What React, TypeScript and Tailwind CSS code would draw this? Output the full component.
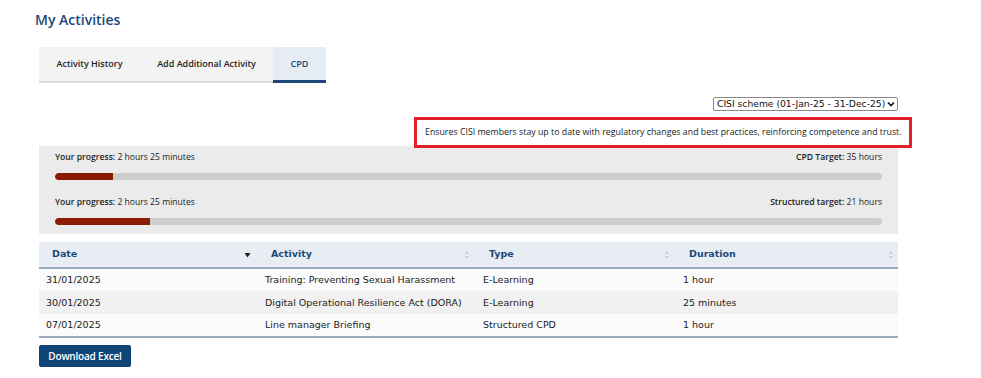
import React from 'react';

const rows = [
  { date: '31/01/2025', activity: 'Training: Preventing Sexual Harassment', type: 'E-Learning', duration: '1 hour' },
  { date: '30/01/2025', activity: 'Digital Operational Resilience Act (DORA)', type: 'E-Learning', duration: '25 minutes' },
  { date: '07/01/2025', activity: 'Line manager Briefing', type: 'Structured CPD', duration: '1 hour' },
];

const progress = [
  { label: 'CPD Target:', target: '35 hours', pct: 7 },
  { label: 'Structured target:', target: '21 hours', pct: 11.5 },
];

function SortIcon() {
  return (
    <svg width="6" height="10" viewBox="0 0 6 10" className="text-[#c9d1da]">
      <path d="M3 1 L5.5 4 H0.5 Z M3 9 L5.5 6 H0.5 Z" fill="currentColor" />
    </svg>
  );
}

export default function App() {
  return (
    <div className="w-[981px] h-[378px] bg-white font-['Open_Sans',sans-serif] text-[#222] overflow-hidden">
      <div className="pl-[39px] w-[898px]">
        {/* Page title */}
        <h1 className="-ml-[4px] pt-[9px] text-[14px] leading-[22px] font-semibold text-[#1c4a78]">My Activities</h1>

        {/* Tabs */}
        <div className="mt-[16px] flex w-[287px] h-[36px] bg-[#f3f3f3] text-[9px] font-semibold text-[#222]">
          <div className="w-[101px] flex items-center justify-center border-b-2 border-[#dcdcdc]">Activity History</div>
          <div className="w-[133px] flex items-center justify-center border-b-2 border-[#dcdcdc]">Add Additional Activity</div>
          <div className="w-[53px] flex items-center justify-center bg-[#e6ecf3] text-[#1c4a78] border-b-[3px] border-[#1c4a78]">CPD</div>
        </div>

        {/* Scheme selector */}
        <div className="mt-[14px] flex justify-end">
          <div className="h-[14px] w-[185px] flex items-center justify-between gap-[2px] px-[3px] border border-[#8a8a8a] rounded-[2px] font-['DejaVu_Sans',sans-serif] text-[9.2px] leading-[12px] text-[#111] whitespace-nowrap">
            <span>CISI scheme (01-Jan-25 - 31-Dec-25)</span>
            <svg width="8" height="6" viewBox="0 0 8 6" className="shrink-0">
              <path d="M1 1.5 L4 4.5 L7 1.5" stroke="#111" strokeWidth="1.6" fill="none" />
            </svg>
          </div>
        </div>

        {/* Highlighted description */}
        <div className="mt-[6px] flex justify-end -mr-[14px] relative z-10">
          <div className="w-[498px] h-[31px] border-[3px] border-[#e0202a] bg-white flex items-center pl-[8px] text-[8.8px] text-[#222]">
            Ensures CISI members stay up to date with regulatory changes and best practices, reinforcing competence and trust.
          </div>
        </div>

        {/* Progress panel */}
        <div className="-mt-[2px] bg-[#ebebeb] px-[16px] pt-[5px] pb-[9px] flex flex-col gap-[16px]">
          {progress.map((p) => (
            <div key={p.label}>
              <div className="flex justify-between text-[8.6px] leading-[12px] text-[#222]">
                <span>
                  <span className="font-semibold">Your progress:</span> 2 hours 25 minutes
                </span>
                <span>
                  <span className="font-semibold">{p.label}</span> {p.target}
                </span>
              </div>
              <div className="mt-[10px] h-[7px] rounded-full bg-[#cdcdcd] overflow-hidden">
                <div className="h-full bg-[#8b1c03] rounded-l-full" style={{ width: `${p.pct}%` }} />
              </div>
            </div>
          ))}
        </div>

        {/* Activity table */}
        <table className="mt-[8px] w-full border-collapse font-['DejaVu_Sans',sans-serif] text-[9.5px] text-[#222]">
          <thead>
            <tr className="h-[26px] bg-[#e8edf3] border-b-2 border-[#9aabbd] text-[#1c4a78] font-bold">
              <th className="w-[219px] text-left pl-[13px]">
                <div className="flex items-center justify-between pr-[7px]">
                  <span>Date</span>
                  <svg width="7" height="6" viewBox="0 0 7 6">
                    <path d="M0.5 1 H6.5 L3.5 5.5 Z" fill="#222" />
                  </svg>
                </div>
              </th>
              <th className="w-[218px] text-left pl-[13px]">
                <div className="flex items-center justify-between pr-[6px]">
                  <span>Activity</span>
                  <SortIcon />
                </div>
              </th>
              <th className="w-[200px] text-left pl-[13px]">
                <div className="flex items-center justify-between pr-[6px]">
                  <span>Type</span>
                  <SortIcon />
                </div>
              </th>
              <th className="text-left pl-[13px]">
                <div className="flex items-center justify-between pr-[4px]">
                  <span>Duration</span>
                  <SortIcon />
                </div>
              </th>
            </tr>
          </thead>
          <tbody className="border-b-2 border-[#9aabbd]">
            {rows.map((r, i) => (
              <tr key={r.date} className={i % 2 === 1 ? 'bg-[#f1f1f1]' : 'bg-[#fbfbfb]'}>
                <td className="h-[23px] p-0 pl-[7px] pt-[1px]">{r.date}</td>
                <td className="h-[23px] p-0 pl-[7px] pt-[1px]">{r.activity}</td>
                <td className="h-[23px] p-0 pl-[7px] pt-[1px]">{r.type}</td>
                <td className="h-[23px] p-0 pl-[7px] pt-[1px]">{r.duration}</td>
              </tr>
            ))}
          </tbody>
        </table>

        {/* Export */}
        <button className="mt-[7px] h-[22px] w-[92px] rounded-[2px] bg-[#0f4577] text-white text-[10px] font-semibold tracking-[-0.2px]">
          Download Excel
        </button>
      </div>
    </div>
  );
}
